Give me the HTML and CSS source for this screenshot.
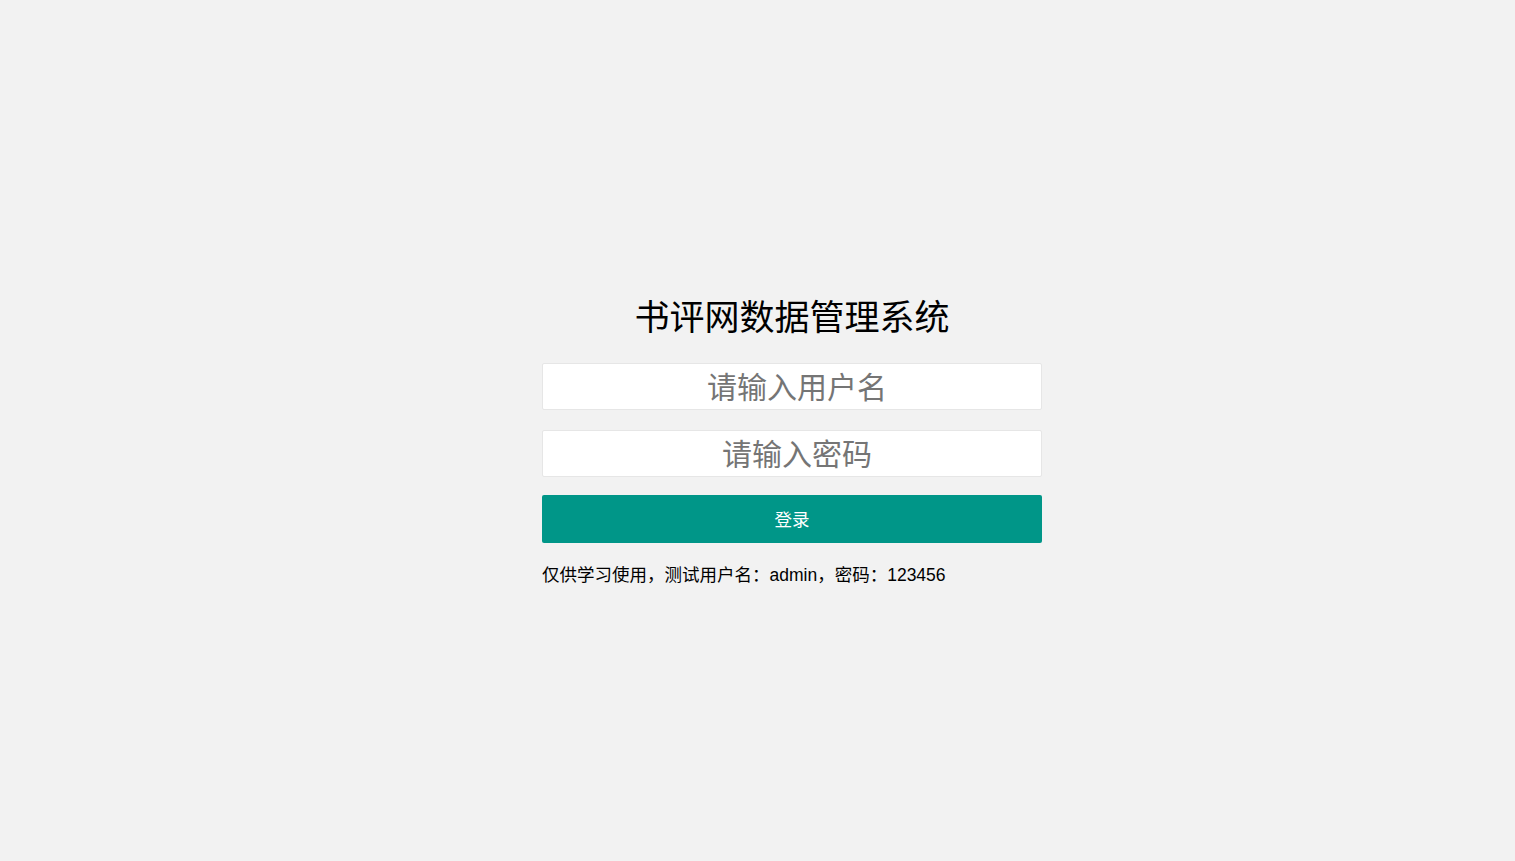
FILE: index.html
```html
<!DOCTYPE html>
<html lang="zh-CN">
<head>
<meta charset="utf-8">
<title>书评网数据管理系统</title>
<link rel="stylesheet" href="styles.css">
</head>
<body>
<div class="page">
  <div class="login">
    <h1 class="title">书评网数据管理系统</h1>
    <form class="form">
      <input class="field" type="text" placeholder="请输入用户名">
      <input class="field" type="password" placeholder="请输入密码">
      <button class="btn" type="button">登录</button>
    </form>
    <p class="note">仅供学习使用，测试用户名：admin，密码：123456</p>
  </div>
</div>
</body>
</html>
```

FILE: styles.css
```css
html, body {
  margin: 0;
  padding: 0;
  height: 100%;
  background: #f2f2f2;
}
body {
  font-family: "Liberation Sans", Arial, "Noto Sans CJK SC", sans-serif;
  color: #000;
}
.page {
  display: flex;
  justify-content: center;
  padding-left: 69px;
  padding-top: 295px;
}
.login {
  width: 500px;
  display: flex;
  flex-direction: column;
}
.title {
  margin: 0;
  font-weight: normal;
  font-size: 35px;
  line-height: 40px;
  text-align: center;
  font-family: "Noto Sans CJK SC", sans-serif;
}
.form {
  margin-top: 28px;
  display: flex;
  flex-direction: column;
}
.field {
  box-sizing: border-box;
  width: 500px;
  height: 47px;
  margin: 0 0 20px 0;
  padding: 0 0 4px 10px;
  border: 1px solid #e6e6e6;
  border-radius: 2px;
  background: #fff;
  font-size: 30px;
  text-align: center;
  font-family: "Noto Sans CJK SC", sans-serif;
  outline: none;
}
.field + .field {
  margin-bottom: 18px;
}
.field::placeholder {
  color: #757575;
}
.btn {
  width: 500px;
  height: 48px;
  border: none;
  border-radius: 2px;
  background: #009688;
  color: #fff;
  font-size: 17.5px;
  font-family: "Noto Sans CJK SC", sans-serif;
  padding: 0 0 2px 0;
}
.note {
  margin: 20px 0 0 0;
  font-size: 17.5px;
  line-height: 24px;
}
```
